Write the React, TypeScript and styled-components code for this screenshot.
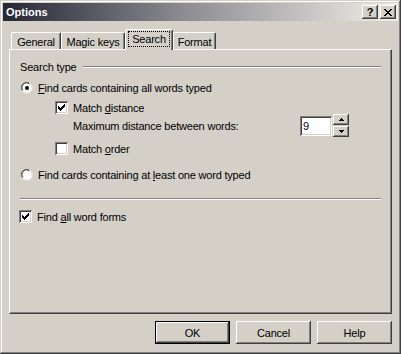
import React from 'react';
import styled, { createGlobalStyle } from 'styled-components';

const GlobalStyle = createGlobalStyle`
  html, body {
    margin: 0;
    padding: 0;
    background: #d4d0c8;
  }
  body {
    font-family: "Liberation Sans", Arial, sans-serif;
    font-size: 11px;
    letter-spacing: -0.2px;
    color: #000;
  }
`;

const face = '#d4d0c8';
const raised = `
  box-shadow: inset -1px -1px #404040, inset 1px 1px #ffffff,
    inset -2px -2px #808080, inset 2px 2px ${face};
`;

const Window = styled.div`
  width: 401px;
  height: 354px;
  box-sizing: border-box;
  padding: 3px;
  background: ${face};
  display: flex;
  flex-direction: column;
  box-shadow: inset -1px -1px #404040, inset 1px 1px ${face},
    inset -2px -2px #808080, inset 2px 2px #ffffff;
`;

const TitleBar = styled.div`
  height: 18px;
  display: flex;
  align-items: center;
  padding: 0 2px 0 3px;
  background: linear-gradient(to right, #262636 0%, #8a8a90 45%, #f2efe8 100%);
`;

const Title = styled.span`
  flex: 1;
  color: #fff;
  font-weight: bold;
  font-size: 11px;
  letter-spacing: 0;
`;

const CaptionButton = styled.div`
  width: 16px;
  height: 14px;
  box-sizing: border-box;
  background: ${face};
  ${raised}
  display: flex;
  align-items: center;
  justify-content: center;
  font-weight: bold;
  font-size: 11px;
  line-height: 1;
  & + & {
    margin-left: 2px;
  }
`;

const Body = styled.div`
  padding: 0 0 0 6px;
  display: flex;
  flex-direction: column;
`;

const TabStrip = styled.div`
  margin-top: 8px;
  height: 20px;
  padding-left: 2px;
  display: flex;
  align-items: flex-end;
`;

const Tab = styled.div<{ $active?: boolean; $w: number }>`
  position: relative;
  z-index: ${(p) => (p.$active ? 2 : 1)};
  width: ${(p) => p.$w}px;
  height: ${(p) => (p.$active ? 21 : 17)}px;
  margin-bottom: ${(p) => (p.$active ? -1 : 0)}px;
  box-sizing: border-box;
  background: ${face};
  border-top: 1px solid #fff;
  border-left: 1px solid #fff;
  border-right: 1px solid #404040;
  border-radius: 2px 2px 0 0;
  box-shadow: inset -1px 0 #808080;
  display: flex;
  justify-content: center;
  padding-top: ${(p) => (p.$active ? 1 : 2)}px;
`;

const TabLabel = styled.span<{ $focus?: boolean }>`
  height: 14px;
  line-height: 14px;
  padding: 0 ${(p) => (p.$focus ? 3 : 0)}px;
  outline: ${(p) => (p.$focus ? '1px dotted #000' : 'none')};
  outline-offset: 0;
  margin-top: ${(p) => (p.$focus ? 1 : 0)}px;
`;

const Panel = styled.div`
  width: 383px;
  height: 265px;
  box-sizing: border-box;
  border-top: 1px solid #fff;
  border-left: 1px solid #fff;
  border-right: 1px solid #404040;
  border-bottom: 1px solid #404040;
  box-shadow: inset -1px -1px #808080;
  padding: 10px 0 0 10px;
  display: flex;
  flex-direction: column;
`;

const GroupHeader = styled.div`
  height: 13px;
  display: flex;
  align-items: center;
  width: 361px;
`;

const Rule = styled.div`
  flex: 1;
  height: 0;
  border-top: 1px solid #808080;
  border-bottom: 1px solid #fff;
`;

const GroupLabel = styled.span`
  margin-right: 6px;
`;

const Row = styled.div<{ $indent?: number; $top: number; $h?: number }>`
  display: flex;
  align-items: center;
  margin-top: ${(p) => p.$top}px;
  margin-left: ${(p) => p.$indent ?? 0}px;
  height: ${(p) => p.$h ?? 13}px;
`;

const Label = styled.span`
  margin-left: 5px;
  white-space: nowrap;
`;

const Key = styled.span`
  text-decoration: underline;
`;

const Separator = styled.div<{ $top: number }>`
  margin-top: ${(p) => p.$top}px;
  width: 361px;
  border-top: 1px solid #808080;
  border-bottom: 1px solid #fff;
`;

const Box = styled.div`
  width: 13px;
  height: 13px;
  box-sizing: border-box;
  background: #fff;
  box-shadow: inset 1px 1px #808080, inset -1px -1px #fff,
    inset 2px 2px #404040, inset -2px -2px ${face};
  display: flex;
  align-items: center;
  justify-content: center;
  flex-shrink: 0;
`;

const Spacer = styled.div`
  flex: 1;
`;

const Spin = styled.div`
  display: flex;
  align-items: flex-start;
  margin-right: 42px;
  height: 24px;
`;

const Edit = styled.div`
  width: 32px;
  height: 20px;
  margin-top: 2px;
  box-sizing: border-box;
  background: #fff;
  box-shadow: inset 1px 1px #808080, inset -1px -1px #fff,
    inset 2px 2px #404040, inset -2px -2px ${face};
  padding: 3px 0 0 3px;
  font-size: 11px;
  line-height: 14px;
`;

const SpinButtons = styled.div`
  display: flex;
  flex-direction: column;
  margin-left: 1px;
  gap: 1px;
`;

const SpinButton = styled.div`
  width: 16px;
  height: 11px;
  box-sizing: border-box;
  background: ${face};
  ${raised}
  display: flex;
  align-items: center;
  justify-content: center;
`;

const ButtonRow = styled.div`
  display: flex;
  justify-content: flex-end;
  gap: 6px;
  margin-top: 7px;
  padding-right: 6px;
`;

const Button = styled.div<{ $default?: boolean }>`
  width: 75px;
  height: 23px;
  box-sizing: border-box;
  background: ${face};
  display: flex;
  align-items: center;
  justify-content: center;
  ${(p) =>
    p.$default
      ? `border: 1px solid #000;
         box-shadow: inset -1px -1px #404040, inset 1px 1px #ffffff,
           inset -2px -2px #808080, inset 2px 2px ${face};`
      : raised}
`;

const Check = () => (
  <svg width="7" height="7" viewBox="0 0 7 7">
    <path d="M0 2h1v1h1v1h1V3h1V2h1V1h1V0h1v3H6v1H5v1H4v1H3v1H2V6H1V5H0z" fill="#000" />
  </svg>
);

const Radio = ({ on }: { on?: boolean }) => (
  <svg width="12" height="12" viewBox="0 0 12 12" style={{ flexShrink: 0 }}>
    <circle cx="6" cy="6" r="5.5" fill="#fff" />
    <path d="M1 8 A5.5 5.5 0 0 1 8 1" stroke="#808080" strokeWidth="1" fill="none" />
    <path d="M2 8.5 A4.5 4.5 0 0 1 8.5 2" stroke="#404040" strokeWidth="1" fill="none" />
    <path d="M11 4 A5.5 5.5 0 0 1 4 11" stroke="#fff" strokeWidth="1" fill="none" />
    <path d="M10 3.5 A4.5 4.5 0 0 1 3.5 10" stroke={face} strokeWidth="1" fill="none" />
    {on && <circle cx="6" cy="6" r="2" fill="#000" />}
  </svg>
);

const Arrow = ({ up }: { up?: boolean }) => (
  <svg width="5" height="3" viewBox="0 0 5 3">
    <path d={up ? 'M2 0h1v1h1v1h1v1H0V2h1V1h1z' : 'M0 0h5v1H4v1H3v1H2V2H1V1H0z'} fill="#000" />
  </svg>
);

const App: React.FC = () => {
  return (
    <>
      <GlobalStyle />
      <Window>
        <TitleBar>
          <Title>Options</Title>
          <CaptionButton>?</CaptionButton>
          <CaptionButton>
            <svg width="8" height="7" viewBox="0 0 8 7">
              <path
                d="M0 0h2v1h1v1h2V1h1V0h2v1H7v1H6v1H5v1h1v1h1v1h1v1H6V6H5V5H3v1H2v1H0V6h1V5h1V4h1V3H2V2H1V1H0z"
                fill="#000"
              />
            </svg>
          </CaptionButton>
        </TitleBar>
        <Body>
          <TabStrip>
            <Tab $w={50}>
              <TabLabel>General</TabLabel>
            </Tab>
            <Tab $w={64}>
              <TabLabel>Magic keys</TabLabel>
            </Tab>
            <Tab $w={48} $active>
              <TabLabel $focus>Search</TabLabel>
            </Tab>
            <Tab $w={43}>
              <TabLabel>Format</TabLabel>
            </Tab>
          </TabStrip>
          <Panel>
            <GroupHeader>
              <GroupLabel>Search type</GroupLabel>
              <Rule />
            </GroupHeader>
            <Row $top={8} $indent={1}>
              <Radio on />
              <Label>
                <Key>F</Key>ind cards containing all words typed
              </Label>
            </Row>
            <Row $top={7} $indent={35}>
              <Box>
                <Check />
              </Box>
              <Label>
                Match <Key>d</Key>istance
              </Label>
            </Row>
            <Row $top={0} $indent={53} $h={24}>
              <span>Maximum distance between words:</span>
              <Spacer />
              <Spin>
                <Edit>9</Edit>
                <SpinButtons>
                  <SpinButton>
                    <Arrow up />
                  </SpinButton>
                  <SpinButton>
                    <Arrow />
                  </SpinButton>
                </SpinButtons>
              </Spin>
            </Row>
            <Row $top={4} $indent={35}>
              <Box />
              <Label>
                Match <Key>o</Key>rder
              </Label>
            </Row>
            <Row $top={13} $indent={1}>
              <Radio />
              <Label>
                Find cards containing at <Key>l</Key>east one word typed
              </Label>
            </Row>
            <Separator $top={17} />
            <Row $top={10} $indent={-1}>
              <Box>
                <Check />
              </Box>
              <Label>
                Find <Key>a</Key>ll word forms
              </Label>
            </Row>
          </Panel>
          <ButtonRow>
            <Button $default>OK</Button>
            <Button>Cancel</Button>
            <Button>Help</Button>
          </ButtonRow>
        </Body>
      </Window>
    </>
  );
};

export default App;
